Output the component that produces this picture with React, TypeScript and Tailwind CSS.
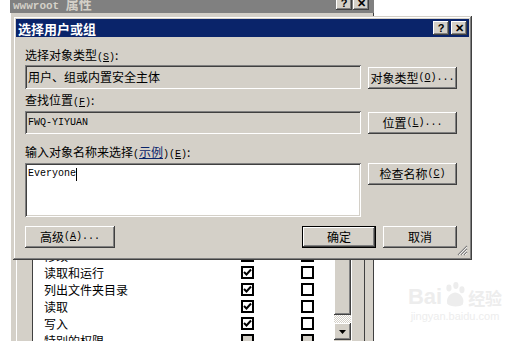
const raised =
  "shadow-[inset_-1px_-1px_#404040,inset_1px_1px_#ffffff,inset_-2px_-2px_#808080,inset_2px_2px_#d4d0c8]";
const sunken =
  "shadow-[inset_1px_1px_#808080,inset_-1px_-1px_#ffffff,inset_2px_2px_#404040,inset_-2px_-2px_#d4d0c8]";

const cjk = "font-['SimSun','Noto_Sans_CJK_SC',sans-serif]";
const mono = "font-['Liberation_Mono',monospace]";

function Btn({
  children,
  className = "",
  isDefault = false,
}: {
  children: React.ReactNode;
  className?: string;
  isDefault?: boolean;
}) {
  return (
    <div
      className={`flex h-[22px] items-center justify-center bg-[#d4d0c8] text-[12px] leading-[12px] text-black ${
        isDefault
          ? "border border-black shadow-[inset_-1px_-1px_#404040,inset_1px_1px_#ffffff,inset_-2px_-2px_#808080]"
          : raised
      } ${className}`}
    >
      {children}
    </div>
  );
}

function Key({ k }: { k: string }) {
  return (
    <span className={`${mono} text-[10px]`}>
      (<span className="underline">{k}</span>)
    </span>
  );
}

function CapBtn({ glyph }: { glyph: string }) {
  return (
    <div
      className={`flex h-[14px] w-[16px] items-center justify-center bg-[#d4d0c8] font-['Liberation_Sans',sans-serif] text-[11px] font-bold leading-none text-black ${raised}`}
    >
      {glyph}
    </div>
  );
}

function Check({ on, grey = false }: { on?: boolean; grey?: boolean }) {
  return (
    <div
      className={`flex h-[13px] w-[13px] items-center justify-center border-2 border-black ${
        grey ? "bg-[#d4d0c8]" : "bg-white"
      }`}
    >
      {on && (
        <svg width="9" height="9" viewBox="0 0 9 9">
          <path d="M1 4 L3.5 6.5 L8 1.5" stroke="#000" strokeWidth="2" fill="none" />
        </svg>
      )}
    </div>
  );
}

const perms: [string, boolean, boolean][] = [
  ["完全控制", false, false],
  ["修改", true, false],
  ["读取和运行", true, false],
  ["列出文件夹目录", true, false],
  ["读取", true, false],
  ["写入", true, false],
  ["特别的权限", false, true],
];

export default function App() {
  return (
    <div className={`relative h-[341px] w-[528px] overflow-hidden bg-white ${cjk}`}>
      {/* back window: wwwroot 属性 */}
      <div className="absolute left-[10px] top-0 flex h-[341px] w-[364px] flex-col bg-[#d4d0c8] shadow-[inset_1px_0_#ffffff,inset_-1px_0_#404040]">
        <div className="flex h-[13px] shrink-0 items-start justify-between overflow-hidden bg-[#808080] pl-[3px] pr-[5px]">
          <span className="-mt-[4px] text-[13px] font-bold leading-[16px] text-[#d4d0c8]">
            <span className={`${mono} text-[11px]`}>wwwroot </span>属性
          </span>
          <div className="-mt-[4px] flex gap-[1px]">
            <CapBtn glyph="?" />
            <CapBtn glyph="✕" />
          </div>
        </div>
        <div className="flex min-h-0 flex-1 flex-col overflow-hidden pl-[6px] pr-[9px] pt-[216px]">
          <div className="flex min-h-0 flex-1 pl-[16px] pr-[13px] shadow-[inset_1px_0_#ffffff,inset_-1px_0_#404040]">
            <div className="flex min-h-0 flex-1 border-l border-t border-[#404040] border-r border-r-white">
              <div className="flex min-h-0 flex-1 flex-col overflow-hidden bg-white">
                {perms.map(([name, a, b]) => (
                  <div key={name} className="flex h-[17px] shrink-0 items-center text-[12px] leading-[12px] text-black">
                    <span className="w-[208px] pl-[11px]">{name}</span>
                    <Check on={a} grey={name === "特别的权限"} />
                    <div className="w-[47px]" />
                    <Check on={false} grey={b} />
                  </div>
                ))}
              </div>
              <div className="flex w-[17px] flex-col">
                <div className={`flex-1 bg-[#d4d0c8] ${raised}`} />
                <div className="h-[8px] shrink-0 bg-[repeating-conic-gradient(#ffffff_0_25%,#d4d0c8_0_50%)] bg-[length:2px_2px]" />
                <div className={`flex h-[17px] shrink-0 items-center justify-center bg-[#d4d0c8] ${raised}`}>
                  <svg width="7" height="4" viewBox="0 0 7 4">
                    <path d="M0 0 H7 L3.5 4 Z" fill="#000" />
                  </svg>
                </div>
                <div className="h-[1px] shrink-0" />
              </div>
            </div>
          </div>
        </div>
      </div>

      {/* front dialog: 选择用户或组 */}
      <div className="absolute left-[13px] top-[16px] flex h-[244px] w-[459px] flex-col bg-[#d4d0c8] p-[3px] shadow-[inset_-1px_-1px_#404040,inset_1px_1px_#d4d0c8,inset_-2px_-2px_#808080,inset_2px_2px_#ffffff]">
        <div className="flex h-[18px] shrink-0 items-center justify-between bg-[#0a246a] pl-[2px] pr-[2px]">
          <span className="text-[13px] font-bold leading-[13px] text-white">选择用户或组</span>
          <div className="flex gap-[2px]">
            <CapBtn glyph="?" />
            <CapBtn glyph="✕" />
          </div>
        </div>

        <div className="relative flex flex-1 flex-col pl-[9px] pr-[12px] text-[12px] leading-[12px] text-black">
          <div className="mt-[12px] h-[12px]">
            选择对象类型<Key k="S" />:
          </div>
          <div className="mt-[4px] flex items-end gap-[7px]">
            <div className={`flex h-[24px] w-[336px] items-center px-[3px] ${sunken}`}>用户、组或内置安全主体</div>
            <Btn className="w-[89px]">
              对象类型<Key k="O" />
              <span className={`${mono} text-[10px]`}>...</span>
            </Btn>
          </div>

          <div className="mt-[5px] h-[12px]">
            查找位置<Key k="F" />:
          </div>
          <div className="mt-[5px] flex items-end gap-[7px]">
            <div className={`flex h-[23px] w-[336px] items-center px-[3px] ${sunken}`}>
              <span className={`${mono} text-[10px]`}>FWQ-YIYUAN</span>
            </div>
            <Btn className="w-[89px]">
              位置<Key k="L" />
              <span className={`${mono} text-[10px]`}>...</span>
            </Btn>
          </div>

          <div className="mt-[12px] h-[12px]">
            输入对象名称来选择<span className={`${mono} text-[10px]`}>(</span>
            <span className="text-[#0a246a] underline">示例</span>
            <span className={`${mono} text-[10px]`}>)</span>
            <Key k="E" />:
          </div>
          <div className="mt-[5px] flex items-start gap-[7px]">
            <div className={`flex h-[54px] w-[336px] items-start bg-white px-[3px] pt-[5px] ${sunken}`}>
              <span className={`${mono} text-[10px] leading-[12px]`}>Everyone</span>
              <span className="h-[13px] w-[1px] bg-black" />
            </div>
            <Btn className="w-[89px]">
              检查名称<Key k="C" />
            </Btn>
          </div>

          <div className="mt-[9px] flex items-center">
            <Btn className="w-[90px]">
              高级<Key k="A" />
              <span className={`${mono} text-[10px]`}>...</span>
            </Btn>
            <div className="flex-1" />
            <Btn isDefault className="w-[74px]">确定</Btn>
            <div className="w-[7px]" />
            <Btn className="w-[74px]">取消</Btn>
          </div>

          <svg className="absolute bottom-[1px] right-[1px]" width="11" height="11" viewBox="0 0 11 11">
            <path d="M10 1 L1 10 M10 4 L4 10 M10 7 L7 10" stroke="#808080" strokeWidth="1.2" />
            <path d="M10 2 L2 10 M10 5 L5 10 M10 8 L8 10" stroke="#ffffff" strokeWidth="0.8" />
          </svg>
        </div>
      </div>

      {/* watermark */}
      <div className="absolute left-[405px] top-[282px] flex w-[100px] flex-col items-center text-[#ededed]">
        <div className="flex items-end">
          <span className="font-['Liberation_Sans',sans-serif] text-[22px] font-bold leading-[22px]">Bai</span>
          <svg width="26" height="26" viewBox="0 0 30 30" fill="#ededed">
            <ellipse cx="8" cy="7" rx="3" ry="4" />
            <ellipse cx="16" cy="4" rx="3" ry="4" />
            <ellipse cx="23" cy="9" rx="3" ry="4" />
            <path d="M6 25 C4 16 12 12 15 12 C20 12 27 18 24 26 C21 29 9 29 6 25 Z" />
          </svg>
          <span className="text-[17px] font-bold leading-[20px]">经验</span>
        </div>
        <span className="mt-[2px] font-['Liberation_Sans',sans-serif] text-[11px] leading-[13px]">jingyan.baidu.com</span>
      </div>
    </div>
  );
}
